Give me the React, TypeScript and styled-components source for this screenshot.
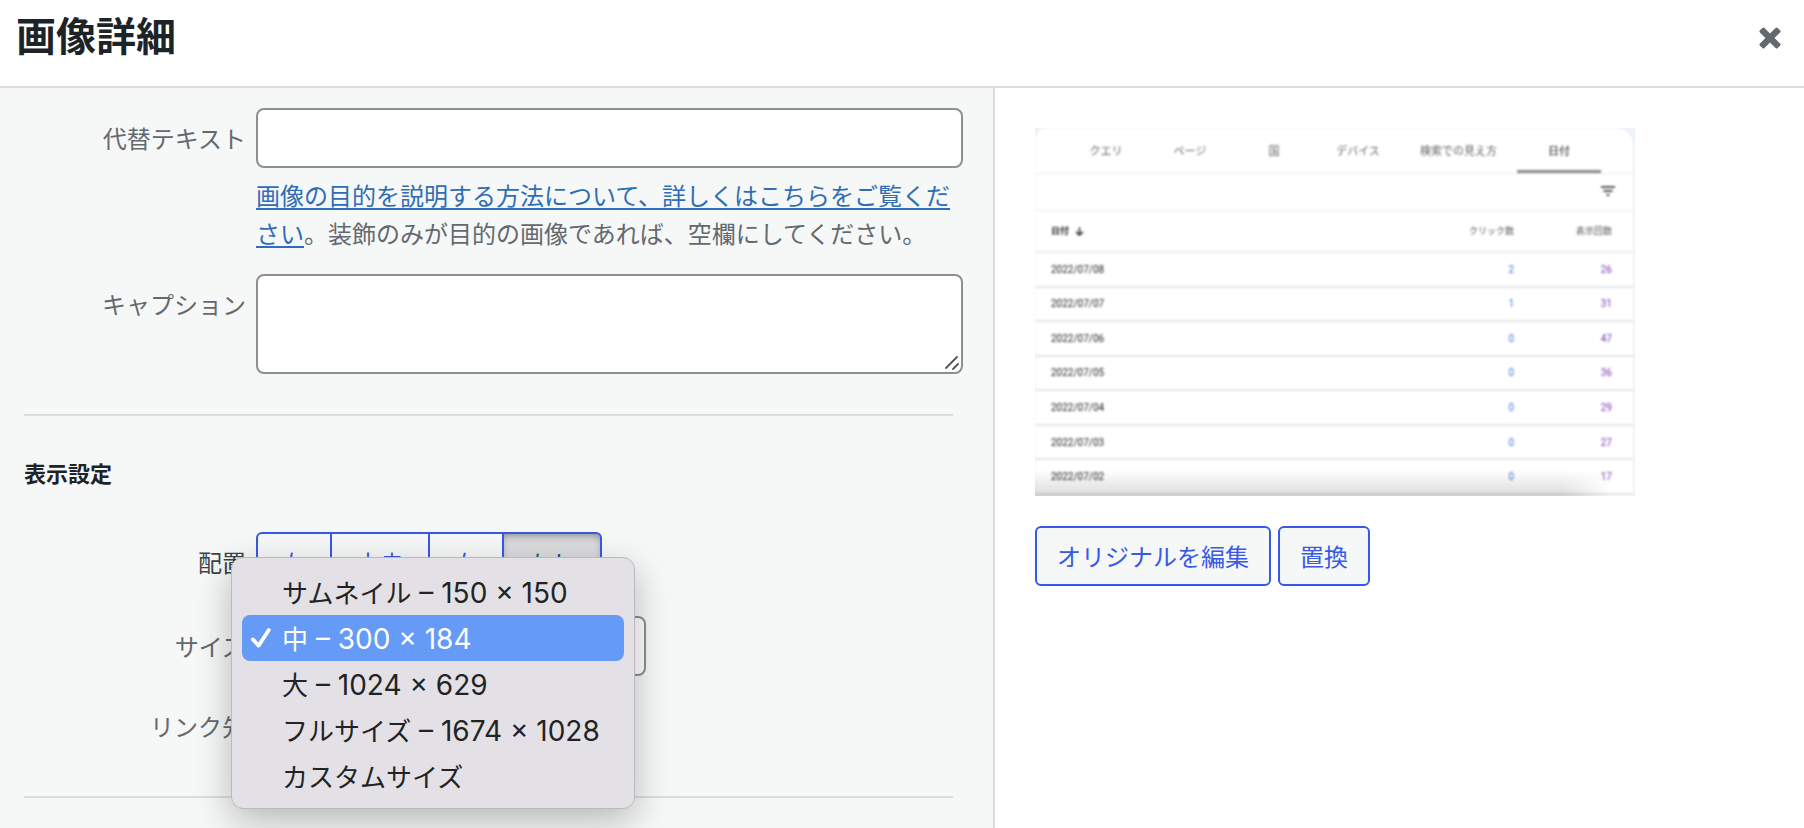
import React from "react";
import styled, { createGlobalStyle, css } from "styled-components";

const jp = `"Noto Sans CJK JP", sans-serif`;

const GlobalStyle = createGlobalStyle`
  *, *::before, *::after { box-sizing: border-box; }
  body {
    margin: 0;
    background: #fff;
    color: #646970;
    font-family: ${jp};
    font-size: 24px;
    line-height: 38px;
  }
  button, input, select, textarea { font: inherit; }
`;

const Modal = styled.div`
  display: flex;
  flex-direction: column;
  min-height: 100vh;
`;

const Header = styled.header`
  display: flex;
  align-items: flex-start;
  justify-content: space-between;
  height: 88px;
  padding: 6px 20px 0 16px;
  border-bottom: 2px solid #dcdcde;
`;

const Title = styled.h1`
  margin: 0;
  color: #1d2327;
  font-size: 40px;
  font-weight: 700;
  line-height: 56px;
`;

const CloseButton = styled.button`
  display: flex;
  align-items: center;
  justify-content: center;
  width: 28px;
  height: 64px;
  padding: 0;
  border: 0;
  background: none;
  color: #646970;
  cursor: pointer;
`;

const Columns = styled.main`
  flex: 1;
  display: grid;
  grid-template-columns: minmax(0, 995fr) minmax(0, 809fr);
`;

const Settings = styled.form`
  padding: 20px 30px 30px 24px;
  border-right: 2px solid #dcdcde;
  background: #f6f8f7;
`;

const FieldList = styled.div`
  display: grid;
  gap: 20px;
`;

const Row = styled.div<{ $spaced?: boolean }>`
  display: grid;
  grid-template-columns: 222px minmax(0, 1fr);
  column-gap: 10px;
  margin-bottom: ${(p) => (p.$spaced ? 4 : 0)}px;
`;

const labelStyle = css<{ $dark?: boolean }>`
  color: ${(p) => (p.$dark ? "#3c434a" : "#646970")};
  line-height: 60px;
  text-align: right;
`;

const Label = styled.label<{ $dark?: boolean }>`
  ${labelStyle}
`;

const GroupLabel = styled.span<{ $dark?: boolean }>`
  ${labelStyle}
`;

const Field = styled.div`
  position: relative;
`;

const boxStyle = css`
  display: block;
  border: 2px solid #8c8f94;
  border-radius: 8px;
  background: #fff;
  color: #2c3338;
`;

const TextInput = styled.input`
  ${boxStyle}
  width: 100%;
  height: 60px;
  padding: 0 16px;
`;

const TextArea = styled.textarea`
  ${boxStyle}
  width: 100%;
  height: 100px;
  padding: 10px 16px;
  resize: none;
`;

const Select = styled.select<{ $width: number }>`
  ${boxStyle}
  width: ${(p) => p.$width}px;
  height: 60px;
  padding: 0 16px;
  appearance: none;
`;

const Grip = styled.svg`
  position: absolute;
  right: 4px;
  bottom: 4px;
`;

const Help = styled.p`
  margin: 8px 0 2px;
`;

const HelpLink = styled.a`
  color: #2f6db5;
  text-decoration: underline;
  text-decoration-thickness: 2px;
  text-underline-offset: 3px;
`;

const Divider = styled.hr`
  height: 2px;
  margin: 40px 10px 0 0;
  border: 0;
  background: #dcdcde;
`;

const SectionTitle = styled.h2`
  margin: 40px 0 44px;
  color: #1d2327;
  font-size: 22px;
  font-weight: 700;
  line-height: 32px;
`;

const ButtonGroup = styled.div`
  display: flex;
`;

const AlignButton = styled.button<{ $active?: boolean }>`
  height: 60px;
  padding: 1px 24px 0;
  border: 2px solid #3858e9;
  background: #f6f8f7;
  color: #3858e9;
  cursor: pointer;

  & + & { margin-left: -2px; }
  &:first-child { border-radius: 6px 0 0 6px; }
  &:last-child { border-radius: 0 6px 6px 0; }

  ${(p) =>
    p.$active &&
    css`
      background: #dcdcde;
      color: #135e96;
      box-shadow: inset 0 4px 10px -4px rgba(0, 0, 0, 0.5);
    `}
`;

const Menu = styled.ul`
  position: absolute;
  top: -59px;
  left: -25px;
  z-index: 2;
  width: 404px;
  margin: 0;
  padding: 11px 10px 9px;
  border: 1px solid #bcbabe;
  border-radius: 12px;
  background: #e4e1e6;
  box-shadow: 0 12px 36px rgba(0, 0, 0, 0.26);
  list-style: none;
`;

const MenuItem = styled.li<{ $selected?: boolean }>`
  display: grid;
  grid-template-columns: 24px 1fr;
  align-items: center;
  column-gap: 8px;
  height: 46px;
  padding-left: 8px;
  border-radius: 8px;
  background: ${(p) => (p.$selected ? "#659af7" : "transparent")};
  color: ${(p) => (p.$selected ? "#fff" : "#232323")};
  font-size: 26px;
  line-height: 44px;
  white-space: nowrap;
`;

const Mark = styled.span`
  display: flex;
`;

const Dimensions = styled.span`
  font-family: Inter, sans-serif;
  font-size: 28px;
  line-height: 28px;
`;

const Preview = styled.section`
  padding: 40px;
`;

const Thumbnail = styled.figure`
  position: relative;
  max-width: 600px;
  height: 368px;
  margin: 0 0 30px;
  overflow: hidden;
  background: #eef3fa;
`;

const Report = styled.div`
  height: 368px;
  margin-right: 2px;
  border-radius: 14px 18px 0 0;
  background: #fff;
  color: #757575;
  font-family: Roboto, ${jp};
  font-size: 10px;
  line-height: 16px;
  filter: blur(1px);
`;

const Tabs = styled.div`
  display: flex;
  height: 46px;
  padding-left: 29px;
  border-bottom: 1px solid #ececec;
`;

const Tab = styled.span<{ $active?: boolean }>`
  min-width: 84px;
  padding: 0 20px;
  border-bottom: 3px solid ${(p) => (p.$active ? "#8a8a8a" : "transparent")};
  color: ${(p) => (p.$active ? "#222" : "#666")};
  font-size: 11px;
  line-height: 48px;
  text-align: center;
  white-space: nowrap;
`;

const FilterBar = styled.div`
  display: flex;
  justify-content: flex-end;
  height: 37px;
  padding: 11px 18px 0 0;
  border-bottom: 1px solid #ececec;
`;

const Table = styled.table`
  width: 100%;
  height: 284px;
  border-collapse: collapse;
  table-layout: fixed;
`;

const HeadCell = styled.th<{ $start?: boolean }>`
  width: ${(p) => (p.$start ? "auto" : "98px")};
  height: 41px;
  padding: 0 21px 0 16px;
  border-bottom: 2px solid #ececec;
  color: ${(p) => (p.$start ? "#222" : "#555")};
  font-size: 9px;
  font-weight: ${(p) => (p.$start ? 700 : 400)};
  text-align: ${(p) => (p.$start ? "left" : "right")};
  white-space: nowrap;
`;

const Cell = styled.td<{ $tone: "date" | "clicks" | "views" }>`
  padding: 1px 21px 0 16px;
  border-bottom: 2px solid #e6e6e6;
  color: ${(p) => ({ date: "#222", clicks: "#3f78d8", views: "#7a35ad" })[p.$tone]};
  text-align: ${(p) => (p.$tone === "date" ? "left" : "right")};
`;

const BottomShade = styled.div`
  position: absolute;
  right: 0;
  bottom: 0;
  left: 0;
  height: 26px;
  background: linear-gradient(to bottom, rgba(0, 0, 0, 0), rgba(0, 0, 0, 0.14));
  mask-image: linear-gradient(to right, #000 88%, transparent 96%);
`;

const Actions = styled.div`
  display: flex;
  gap: 7px;
`;

const ActionButton = styled.button`
  height: 60px;
  padding: 0 20px;
  border: 2px solid #3858e9;
  border-radius: 6px;
  background: #f6f8f7;
  color: #3858e9;
  cursor: pointer;
`;

const sizes = [
  { name: "サムネイル", dimensions: "– 150 × 150" },
  { name: "中", dimensions: "– 300 × 184" },
  { name: "大", dimensions: "– 1024 × 629" },
  { name: "フルサイズ", dimensions: "– 1674 × 1028" },
  { name: "カスタムサイズ", dimensions: "" },
];
const selectedSize = "中";

const alignments = ["左", "中央", "右", "なし"];

const tabs = ["クエリ", "ページ", "国", "デバイス", "検索での見え方", "日付"];

const report: [string, number, number][] = [
  ["2022/07/08", 2, 26],
  ["2022/07/07", 1, 31],
  ["2022/07/06", 0, 47],
  ["2022/07/05", 0, 36],
  ["2022/07/04", 0, 29],
  ["2022/07/03", 0, 27],
  ["2022/07/02", 0, 17],
];

const CloseIcon = () => (
  <svg width="22" height="22" viewBox="0 0 22 22" fill="currentColor" aria-hidden="true">
    <rect x="-1.5" y="7.8" width="25" height="6.4" rx="1.5" transform="rotate(45 11 11)" />
    <rect x="-1.5" y="7.8" width="25" height="6.4" rx="1.5" transform="rotate(-45 11 11)" />
  </svg>
);

const CheckIcon = () => (
  <svg width="22" height="22" viewBox="0 0 22 22" fill="none" stroke="currentColor" strokeWidth="3.8" strokeLinecap="round" strokeLinejoin="round" aria-hidden="true">
    <path d="M2.8 12.4 8.6 18.6 18.8 3" />
  </svg>
);

const FilterIcon = () => (
  <svg width="14" height="12" viewBox="0 0 14 12" stroke="#555" strokeWidth="2" aria-hidden="true">
    <path d="M0 2h14M2.5 6h9M5.5 10h3" />
  </svg>
);

const SortIcon = () => (
  <svg width="9" height="9" viewBox="0 0 9 9" fill="none" stroke="#333" strokeWidth="1.6" aria-hidden="true">
    <path d="M4.5 0.5v7.5M1 4.8 4.5 8 8 4.8" />
  </svg>
);

const SortLabel = styled.span`
  display: inline-flex;
  align-items: center;
  gap: 6px;
`;

function ReportImage() {
  return (
    <Thumbnail>
      <Report>
        <Tabs>
          {tabs.map((t) => (
            <Tab key={t} $active={t === "日付"}>{t}</Tab>
          ))}
        </Tabs>
        <FilterBar>
          <FilterIcon />
        </FilterBar>
        <Table>
          <thead>
            <tr>
              <HeadCell $start scope="col">
                <SortLabel>日付 <SortIcon /></SortLabel>
              </HeadCell>
              <HeadCell scope="col">クリック数</HeadCell>
              <HeadCell scope="col">表示回数</HeadCell>
            </tr>
          </thead>
          <tbody>
            {report.map(([date, clicks, views]) => (
              <tr key={date}>
                <Cell $tone="date">{date}</Cell>
                <Cell $tone="clicks">{clicks}</Cell>
                <Cell $tone="views">{views}</Cell>
              </tr>
            ))}
          </tbody>
        </Table>
      </Report>
      <BottomShade />
    </Thumbnail>
  );
}

export default function App() {
  return (
    <>
      <GlobalStyle />
      <Modal>
        <Header>
          <Title>画像詳細</Title>
          <CloseButton type="button" aria-label="閉じる">
            <CloseIcon />
          </CloseButton>
        </Header>
        <Columns>
          <Settings>
            <FieldList>
              <Row>
                <Label htmlFor="alt">代替テキスト</Label>
                <Field>
                  <TextInput id="alt" type="text" />
                  <Help>
                    <HelpLink href="#alt-help">画像の目的を説明する方法について、詳しくはこちらをご覧ください</HelpLink>
                    。装飾のみが目的の画像であれば、空欄にしてください。
                  </Help>
                </Field>
              </Row>
              <Row>
                <Label htmlFor="caption">キャプション</Label>
                <Field>
                  <TextArea id="caption" />
                  <Grip width="14" height="14" viewBox="0 0 14 14" stroke="#555" strokeWidth="1.8" strokeLinecap="round" aria-hidden="true">
                    <path d="M1 12 12 1M8 13l5-5" />
                  </Grip>
                </Field>
              </Row>
            </FieldList>
            <Divider />
            <SectionTitle>表示設定</SectionTitle>
            <FieldList>
              <Row $spaced>
                <GroupLabel id="align-label" $dark>配置</GroupLabel>
                <ButtonGroup role="group" aria-labelledby="align-label">
                  {alignments.map((a) => (
                    <AlignButton key={a} type="button" $active={a === "なし"} aria-pressed={a === "なし"}>
                      {a}
                    </AlignButton>
                  ))}
                </ButtonGroup>
              </Row>
              <Row>
                <Label htmlFor="size">サイズ</Label>
                <Field>
                  <Select id="size" $width={390} defaultValue={selectedSize}>
                    {sizes.map((s) => (
                      <option key={s.name} value={s.name}>{`${s.name} ${s.dimensions}`}</option>
                    ))}
                  </Select>
                  <Menu role="listbox" aria-label="サイズ">
                    {sizes.map((s) => (
                      <MenuItem
                        key={s.name}
                        role="option"
                        aria-selected={s.name === selectedSize}
                        $selected={s.name === selectedSize}
                      >
                        <Mark>{s.name === selectedSize && <CheckIcon />}</Mark>
                        <span>
                          {s.name}
                          {s.dimensions && <Dimensions> {s.dimensions}</Dimensions>}
                        </span>
                      </MenuItem>
                    ))}
                  </Menu>
                </Field>
              </Row>
              <Row>
                <Label htmlFor="link">リンク先</Label>
                <Field>
                  <Select id="link" $width={240} defaultValue="なし">
                    <option>なし</option>
                  </Select>
                </Field>
              </Row>
            </FieldList>
            <Divider />
          </Settings>
          <Preview>
            <ReportImage />
            <Actions>
              <ActionButton type="button">オリジナルを編集</ActionButton>
              <ActionButton type="button">置換</ActionButton>
            </Actions>
          </Preview>
        </Columns>
      </Modal>
    </>
  );
}
